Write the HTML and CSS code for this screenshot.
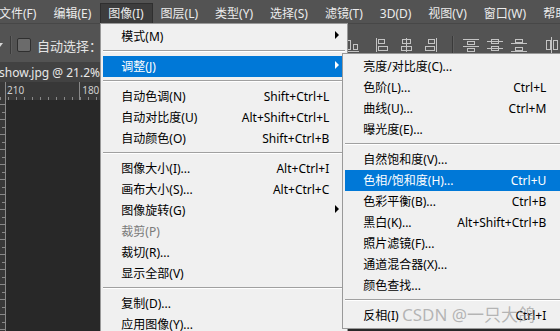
FILE: index.html
```html
<!DOCTYPE html>
<html lang="zh-CN">
<head>
    <meta charset="UTF-8">
    <meta name="viewport" content="width=device-width, initial-scale=1.0">
    <title>图像 - 调整菜单</title>
    <link rel="stylesheet" href="styles.css">
</head>
<body>
<nav class="menubar">
    <div class="mb-item">文件(F)</div>
    <div class="mb-item">编辑(E)</div>
    <div class="mb-item open">图像(I)
        <ul class="menu main-menu">
            <li class="item"><span class="label">模式(M)</span><span class="key"></span><span class="arrow"></span></li>
            <li class="sep"></li>
            <li class="item active">
                <span class="label">调整(J)</span><span class="key"></span><span class="arrow"></span>
                <ul class="menu submenu">
                    <li class="item"><span class="label">亮度/对比度(C)...</span><span class="key"></span><span></span></li>
                    <li class="item"><span class="label">色阶(L)...</span><span class="key">Ctrl+L</span><span></span></li>
                    <li class="item"><span class="label">曲线(U)...</span><span class="key">Ctrl+M</span><span></span></li>
                    <li class="item"><span class="label">曝光度(E)...</span><span class="key"></span><span></span></li>
                    <li class="sep"></li>
                    <li class="item"><span class="label">自然饱和度(V)...</span><span class="key"></span><span></span></li>
                    <li class="item active"><span class="label">色相/饱和度(H)...</span><span class="key">Ctrl+U</span><span></span></li>
                    <li class="item"><span class="label">色彩平衡(B)...</span><span class="key">Ctrl+B</span><span></span></li>
                    <li class="item"><span class="label">黑白(K)...</span><span class="key">Alt+Shift+Ctrl+B</span><span></span></li>
                    <li class="item"><span class="label">照片滤镜(F)...</span><span class="key"></span><span></span></li>
                    <li class="item"><span class="label">通道混合器(X)...</span><span class="key"></span><span></span></li>
                    <li class="item"><span class="label">颜色查找...</span><span class="key"></span><span></span></li>
                    <li class="sep"></li>
                    <li class="item"><span class="label">反相(I)</span><span class="key">Ctrl+I</span><span></span></li>
                </ul>
            </li>
            <li class="sep"></li>
            <li class="item"><span class="label">自动色调(N)</span><span class="key">Shift+Ctrl+L</span><span></span></li>
            <li class="item"><span class="label">自动对比度(U)</span><span class="key">Alt+Shift+Ctrl+L</span><span></span></li>
            <li class="item"><span class="label">自动颜色(O)</span><span class="key">Shift+Ctrl+B</span><span></span></li>
            <li class="sep"></li>
            <li class="item"><span class="label">图像大小(I)...</span><span class="key">Alt+Ctrl+I</span><span></span></li>
            <li class="item"><span class="label">画布大小(S)...</span><span class="key">Alt+Ctrl+C</span><span></span></li>
            <li class="item"><span class="label">图像旋转(G)</span><span class="key"></span><span class="arrow"></span></li>
            <li class="item disabled"><span class="label">裁剪(P)</span><span class="key"></span><span></span></li>
            <li class="item"><span class="label">裁切(R)...</span><span class="key"></span><span></span></li>
            <li class="item"><span class="label">显示全部(V)</span><span class="key"></span><span></span></li>
            <li class="sep"></li>
            <li class="item"><span class="label">复制(D)...</span><span class="key"></span><span></span></li>
            <li class="item"><span class="label">应用图像(Y)...</span><span class="key"></span><span></span></li>
        </ul>
    </div>
    <div class="mb-item">图层(L)</div>
    <div class="mb-item">类型(Y)</div>
    <div class="mb-item">选择(S)</div>
    <div class="mb-item">滤镜(T)</div>
    <div class="mb-item">3D(D)</div>
    <div class="mb-item">视图(V)</div>
    <div class="mb-item">窗口(W)</div>
    <div class="mb-item">帮助(H)</div>
</nav>

<div class="options-bar">
    <div class="opt-left">
        <span class="dd-arrow"></span>
        <span class="opt-sep"></span>
        <span class="checkbox"></span>
        <span class="opt-label">自动选择：</span>
    </div>
    <div class="align-tools">
        <!-- bottom edges -->
        <svg class="tool" viewBox="0 0 16 16"><path d="M1 14.5h14M3.5 3.5h3v9h-3zM9.5 7.5h4v5h-4z"/></svg>
        <!-- left / center / right edges -->
        <svg class="tool gap-a" viewBox="0 0 16 16"><path d="M1.5 1v14M3.5 2.5h6v4h-6zM3.5 9.5h9v4h-9z"/></svg>
        <svg class="tool" viewBox="0 0 16 16"><path d="M7.5 1v14M3.5 2.5h8v4h-8zM2.5 9.5h10v4h-10z"/></svg>
        <svg class="tool" viewBox="0 0 16 16"><path d="M13.5 1v14M5.5 2.5h6v4h-6zM2.5 9.5h9v4h-9z"/></svg>
        <span class="tool-sep"></span>
        <!-- distribute -->
        <svg class="tool gap-b" viewBox="0 0 16 16"><path d="M0 2.5h16M4.5 4.5h7v3h-7zM0 9.5h16M4.5 11.5h7v3h-7z"/></svg>
        <svg class="tool" viewBox="0 0 16 16"><path d="M0 4.5h16M4.5 2.5h7v4h-7zM0 11.5h16M4.5 9.5h7v4h-7z"/></svg>
        <svg class="tool" viewBox="0 0 16 16"><path d="M0 6.5h16M4.5 2.5h7v3h-7zM0 14.5h16M4.5 10.5h7v3h-7z"/></svg>
        <svg class="tool gap-c" viewBox="0 0 16 16"><path d="M6.5 0v16M1.5 3.5h4v9h-4zM8.5 3.5h4v9h-4z"/></svg>
    </div>
</div>

<div class="doc-tabs">
    <span class="doc-tab">show.jpg @ 21.2%</span>
</div>

<div class="workspace">
    <div class="ruler-top">
        <span class="mark">210</span>
        <span class="mark">180</span>
    </div>
    <div class="canvas-row">
        <div class="ruler-left"></div>
        <div class="canvas"></div>
    </div>
</div>

<div class="watermark">CSDN @一只大鸽</div>
</body>
</html>
```

FILE: styles.css
```css
html, body {
    margin: 0;
    height: 100%;
}
body {
    width: 560px;
    height: 331px;
    overflow: hidden;
    background: #282828;
    font-family: "Noto Sans", "Noto Sans CJK SC", sans-serif;
    font-size: 12px;
    display: flex;
    flex-direction: column;
    position: relative;
}
ul {
    list-style: none;
    margin: 0;
    padding: 0;
}

/* top menu bar */
.menubar {
    height: 23px;
    flex: none;
    background: #535353;
    display: flex;
    align-items: flex-end;
    margin-left: -9px;
    color: #ececec;
    position: relative;
    z-index: 2;
    white-space: nowrap;
}
.mb-item {
    height: 19px;
    line-height: 19px;
    padding: 0 8px 0 7px;
    border: 1px solid transparent;
    border-bottom: 0;
    position: relative;
}
.mb-item.open {
    background: #3d3d3d;
    border-color: #2f2f2f;
}

/* dropdown menus */
.menu {
    position: absolute;
    background: #f0f0f0;
    border: 1px solid #999;
    padding: 2px;
    color: #000;
    box-sizing: border-box;
    line-height: 21px;
}
.main-menu {
    top: 100%;
    left: -1px;
    width: 248px;
}
.submenu {
    top: -3px;
    left: calc(100% - 3px);
    width: 223px;
}
.item {
    height: 21px;
    display: grid;
    grid-template-columns: 1fr auto 16px;
    align-items: center;
    padding-left: 18px;
    position: relative;
}
.item.active {
    background: #0078d7;
    color: #fff;
}
.item.active .item {
    color: #000;
}
.item.active .item.active {
    color: #fff;
}
.item.disabled {
    color: #7a7a7a;
}
.arrow {
    width: 0;
    height: 0;
    margin-left: 6px;
    margin-top: -3px;
    border-left: 4px solid currentColor;
    border-top: 4px solid transparent;
    border-bottom: 4px solid transparent;
}
.sep {
    height: 9px;
    display: flex;
    align-items: center;
}
.sep::before {
    content: "";
    flex: 1;
    margin-top: -1px;
    border-top: 1px solid #a0a0a0;
    border-bottom: 1px solid #fff;
}

/* options bar */
.options-bar {
    height: 39px;
    flex: none;
    background: #535353;
    border-top: 1px solid #474747;
    box-sizing: border-box;
    padding-top: 4px;
    display: flex;
    align-items: center;
    white-space: nowrap;
}
.opt-left {
    width: 344px;
    flex: none;
    display: flex;
    align-items: center;
}
.dd-arrow {
    margin-left: -3px;
    border-top: 4px solid #d6d6d6;
    border-left: 3px solid transparent;
    border-right: 3px solid transparent;
}
.opt-sep {
    width: 1px;
    height: 18px;
    margin-left: 7px;
    background: #3a3a3a;
    box-shadow: 1px 0 0 #5e5e5e;
}
.checkbox {
    width: 12px;
    height: 12px;
    margin-left: 6px;
    border: 1px solid #2f2f2f;
    border-radius: 2px;
    background: #6b6b6b;
}
.opt-label {
    margin-left: 6px;
    font-size: 13px;
    color: #e4e4e4;
}
.align-tools {
    display: flex;
    align-items: center;
    flex: none;
}
.tool {
    width: 16px;
    height: 16px;
    flex: none;
    fill: none;
    stroke: #c4c4c4;
    stroke-width: 1;
    shape-rendering: crispEdges;
    margin-right: 8px;
}
.tool.gap-a {
    margin-left: 7px;
}
.tool.gap-b {
    margin-left: 10px;
}
.tool.gap-c {
    margin-left: 10px;
}
.tool-sep {
    width: 1px;
    height: 18px;
    margin-left: 5px;
    background: #3a3a3a;
    box-shadow: 1px 0 0 #5e5e5e;
}

/* document tab */
.doc-tabs {
    height: 20px;
    flex: none;
    background: #424242;
    display: flex;
    align-items: center;
}
.doc-tab {
    margin-left: -1px;
    color: #e8e8e8;
    font-size: 12px;
    white-space: nowrap;
}

/* rulers + canvas */
.workspace {
    flex: 1;
    display: flex;
    flex-direction: column;
}
.ruler-top {
    height: 18px;
    flex: none;
    background-color: #383838;
    background-image:
        linear-gradient(#888, #888),
        linear-gradient(#888, #888),
        repeating-linear-gradient(90deg, transparent 0 7px, #888 7px 8px, transparent 8px 7.35px);
    background-size: 1px 18px, 1px 18px, 100% 3px;
    background-position: 5px 0, 79px 0, 1px 100%;
    background-repeat: no-repeat, no-repeat, repeat-x;
    display: flex;
    align-items: center;
    font-size: 10px;
    color: #cfcfcf;
    line-height: 1;
    padding-bottom: 2px;
    box-sizing: border-box;
}
.mark:first-child {
    margin-left: 7px;
}
.mark + .mark {
    margin-left: 58px;
}
.canvas-row {
    flex: 1;
    display: flex;
}
.ruler-left {
    width: 5px;
    flex: none;
    background-color: #383838;
    background-image:
        repeating-linear-gradient(180deg, transparent 0 4px, #888 4px 5px, transparent 5px 15px),
        repeating-linear-gradient(180deg, transparent 0 12px, #888 12px 13px, transparent 13px 15px);
    background-size: 5px 100%, 3px 100%;
    background-position: 0 0, 2px 0;
    background-repeat: no-repeat;
    border-right: 1px solid #888;
}
.canvas {
    flex: 1;
    background: #282828;
}

.watermark {
    position: absolute;
    z-index: 3;
    left: 402px;
    top: 305px;
    font-size: 17px;
    line-height: 20px;
    color: rgba(140, 140, 140, 0.6);
    white-space: nowrap;
}
```
